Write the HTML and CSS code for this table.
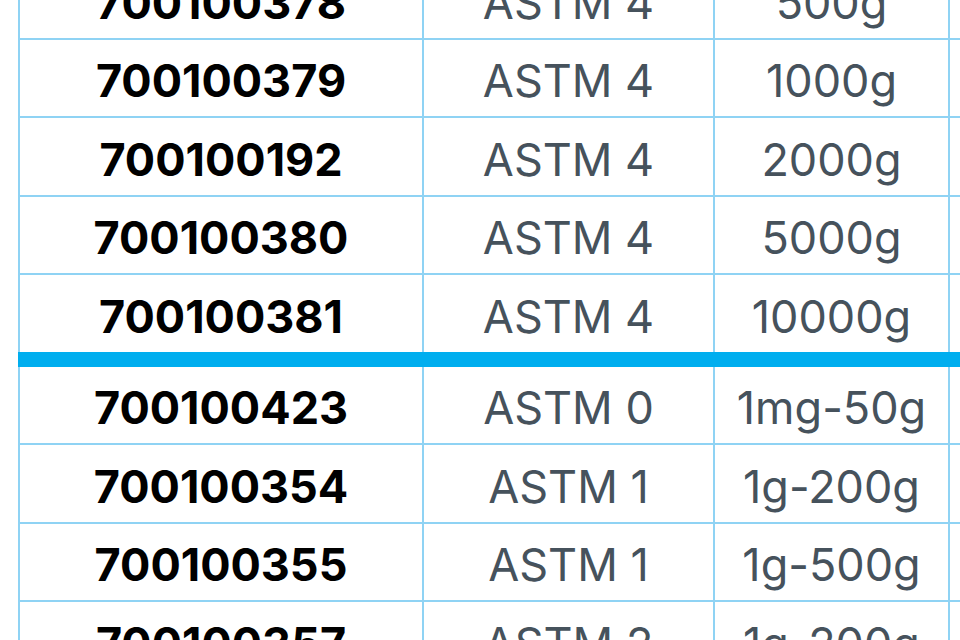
FILE: index.html
```html
<!DOCTYPE html>
<html>
<head>
<meta charset="utf-8">
<link rel="stylesheet" href="styles.css">
</head>
<body>
<table class="weights">
  <colgroup>
    <col class="c-code"><col class="c-class"><col class="c-mass"><col class="c-extra">
  </colgroup>
  <tbody>
    <tr><td class="code">700100378</td><td>ASTM 4</td><td>500g</td><td></td></tr>
    <tr><td class="code">700100379</td><td>ASTM 4</td><td>1000g</td><td></td></tr>
    <tr><td class="code">700100192</td><td>ASTM 4</td><td>2000g</td><td></td></tr>
    <tr><td class="code">700100380</td><td>ASTM 4</td><td>5000g</td><td></td></tr>
    <tr class="group-end"><td class="code">700100381</td><td>ASTM 4</td><td>10000g</td><td></td></tr>
    <tr><td class="code">700100423</td><td>ASTM 0</td><td>1mg-50g</td><td></td></tr>
    <tr><td class="code">700100354</td><td>ASTM 1</td><td>1g-200g</td><td></td></tr>
    <tr><td class="code">700100355</td><td>ASTM 1</td><td>1g-500g</td><td></td></tr>
    <tr><td class="code">700100357</td><td>ASTM 2</td><td>1g-200g</td><td></td></tr>
  </tbody>
</table>
</body>
</html>
```
FILE: styles.css
```css
html, body {
  margin: 0;
  padding: 0;
  background: #ffffff;
  overflow: hidden;
}
.weights {
  border-collapse: collapse;
  table-layout: fixed;
  width: 1100px;
  margin: -41px 0 0 18px;
  font-family: Inter, "Liberation Sans", sans-serif;
  font-size: 45px;
  color: #46525c;
}
.c-code { width: 404px; }
.c-class { width: 291px; }
.c-mass { width: 235px; }
.c-extra { width: 170px; }
.weights td {
  height: 70.5px;
  padding: 6px 0 0;
  text-align: center;
  vertical-align: middle;
  border: 2px solid #8fd3f4;
  line-height: 1;
}
.weights td.code {
  font-weight: 700;
  color: #000000;
}
.weights tr.group-end td {
  border-bottom: 15px solid #00aeef;
}
```
